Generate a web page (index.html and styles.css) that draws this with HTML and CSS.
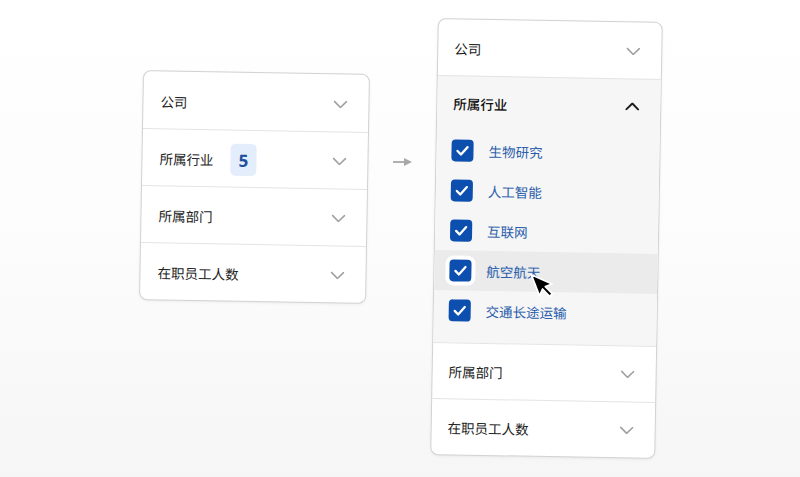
FILE: index.html
```html
<!DOCTYPE html>
<html lang="zh">
<head>
<meta charset="utf-8">
<link rel="stylesheet" href="styles.css">
</head>
<body>
<div class="stage">
  <div class="card card-left">
    <div class="row"><span class="label">公司</span><svg class="chev" viewBox="0 0 14 8"><polyline points="1,1 7,7 13,1"/></svg></div>
    <div class="row"><span class="label">所属行业</span><span class="badge">5</span><svg class="chev" viewBox="0 0 14 8"><polyline points="1,1 7,7 13,1"/></svg></div>
    <div class="row"><span class="label">所属部门</span><svg class="chev" viewBox="0 0 14 8"><polyline points="1,1 7,7 13,1"/></svg></div>
    <div class="row"><span class="label">在职员工人数</span><svg class="chev" viewBox="0 0 14 8"><polyline points="1,1 7,7 13,1"/></svg></div>
  </div>

  <svg class="arrow" viewBox="0 0 20 10"><line x1="1" y1="5" x2="13" y2="5"/><polygon points="12,1 20,5 12,9"/></svg>

  <div class="card card-right">
    <div class="row"><span class="label">公司</span><svg class="chev" viewBox="0 0 14 8"><polyline points="1,1 7,7 13,1"/></svg></div>
    <div class="section">
      <div class="sec-head"><span class="label strong">所属行业</span><svg class="chev up" viewBox="0 0 14 8"><polyline points="1,7 7,1 13,7"/></svg></div>
      <div class="opt"><span class="box"><svg viewBox="0 0 22 22"><polyline points="6,11.5 9.5,15 16,7.5"/></svg></span><span class="opt-label">生物研究</span></div>
      <div class="opt"><span class="box"><svg viewBox="0 0 22 22"><polyline points="6,11.5 9.5,15 16,7.5"/></svg></span><span class="opt-label">人工智能</span></div>
      <div class="opt"><span class="box"><svg viewBox="0 0 22 22"><polyline points="6,11.5 9.5,15 16,7.5"/></svg></span><span class="opt-label">互联网</span></div>
      <div class="opt hover"><span class="box focus"><svg viewBox="0 0 22 22"><polyline points="6,11.5 9.5,15 16,7.5"/></svg></span><span class="opt-label">航空航天</span>
        <svg class="cursor" viewBox="-1.5 -1.5 15 24"><path d="M0 0 V17 L4 13 L7 20 L9.6 18.9 L6.6 12 H12 Z"/></svg>
      </div>
      <div class="opt"><span class="box"><svg viewBox="0 0 22 22"><polyline points="6,11.5 9.5,15 16,7.5"/></svg></span><span class="opt-label">交通长途运输</span></div>
    </div>
    <div class="row"><span class="label">所属部门</span><svg class="chev" viewBox="0 0 14 8"><polyline points="1,1 7,7 13,1"/></svg></div>
    <div class="row"><span class="label">在职员工人数</span><svg class="chev" viewBox="0 0 14 8"><polyline points="1,1 7,7 13,1"/></svg></div>
  </div>
</div>
</body>
</html>
```

FILE: styles.css
```css
html, body {
  margin: 0;
  padding: 0;
}
body {
  width: 800px;
  height: 477px;
  overflow: hidden;
  background: linear-gradient(180deg, #ffffff 0%, #fcfcfc 50%, #f6f6f6 100%);
  font-family: "Noto Sans CJK SC", "Noto Sans", sans-serif;
  color: #222;
}
.stage {
  display: flex;
  align-items: flex-start;
  padding-left: 141px;
}
.card {
  background: #fff;
  border: 1px solid #d2d2d2;
  border-radius: 8px;
  box-shadow: 0 1px 3px rgba(0,0,0,0.06);
  overflow: hidden;
  transform: rotate(1deg);
  display: flex;
  flex-direction: column;
}
.card-left {
  width: 225px;
  margin-top: 72px;
}
.card-right {
  width: 223px;
  margin-top: 20px;
  margin-left: 22px;
}
.row {
  box-sizing: border-box;
  height: 56px;
  display: flex;
  align-items: center;
  padding: 1px 21px 0 16px;
  border-top: 1px solid #e4e4e4;
}
.row:first-child {
  border-top: none;
}
.card-left .row {
  height: 57px;
  padding-left: 17px;
  padding-top: 2px;
}
.label {
  font-size: 13.5px;
  color: #222;
}
.label.strong {
  font-weight: 500;
  color: #111;
}
.badge {
  margin-left: 17px;
  width: 26px;
  height: 32px;
  border-radius: 5px;
  background: #e3edfb;
  color: #1f4e9d;
  font-family: "Open Sans", "Noto Sans", sans-serif;
  font-weight: 700;
  font-size: 17px;
  display: flex;
  align-items: center;
  justify-content: center;
}
.chev {
  margin-left: auto;
  width: 14px;
  height: 8px;
  fill: none;
  stroke: #a0a0a0;
  stroke-width: 1.6;
  stroke-linecap: round;
  stroke-linejoin: round;
}
.chev.up {
  stroke: #1e1e1e;
  stroke-width: 2;
}
.section {
  background: #f6f6f6;
  border-top: 1px solid #e4e4e4;
  padding-bottom: 12px;
  display: flex;
  flex-direction: column;
}
.sec-head {
  height: 54px;
  display: flex;
  align-items: center;
  padding: 0 21px 0 16px;
}
.opt {
  position: relative;
  height: 40px;
  display: flex;
  align-items: center;
  padding-left: 15px;
}
.opt.hover {
  background: #ebebeb;
}
.box {
  width: 22px;
  height: 22px;
  border-radius: 4px;
  background: #0d4fae;
  display: flex;
  align-items: center;
  justify-content: center;
}
.box svg {
  width: 22px;
  height: 22px;
  fill: none;
  stroke: #fff;
  stroke-width: 2.3;
  stroke-linecap: round;
  stroke-linejoin: round;
}
.box.focus {
  box-shadow: 0 0 0 4px #ffffff;
}
.opt-label {
  margin-left: 15px;
  font-size: 13.5px;
  color: #2a5dab;
}
.cursor {
  position: absolute;
  left: 95px;
  top: 21px;
  width: 20px;
  height: 32px;
  transform-origin: 2px 2px;
  transform: rotate(-22deg);
  fill: #000;
  stroke: #fff;
  stroke-width: 1.3;
  stroke-linejoin: round;
  overflow: visible;
}
.arrow {
  width: 20px;
  height: 10px;
  margin-top: 157px;
  margin-left: 24px;
  fill: #a8a8a8;
  stroke: #a8a8a8;
  stroke-width: 1.8;
}
.arrow polygon {
  stroke: none;
}
```
